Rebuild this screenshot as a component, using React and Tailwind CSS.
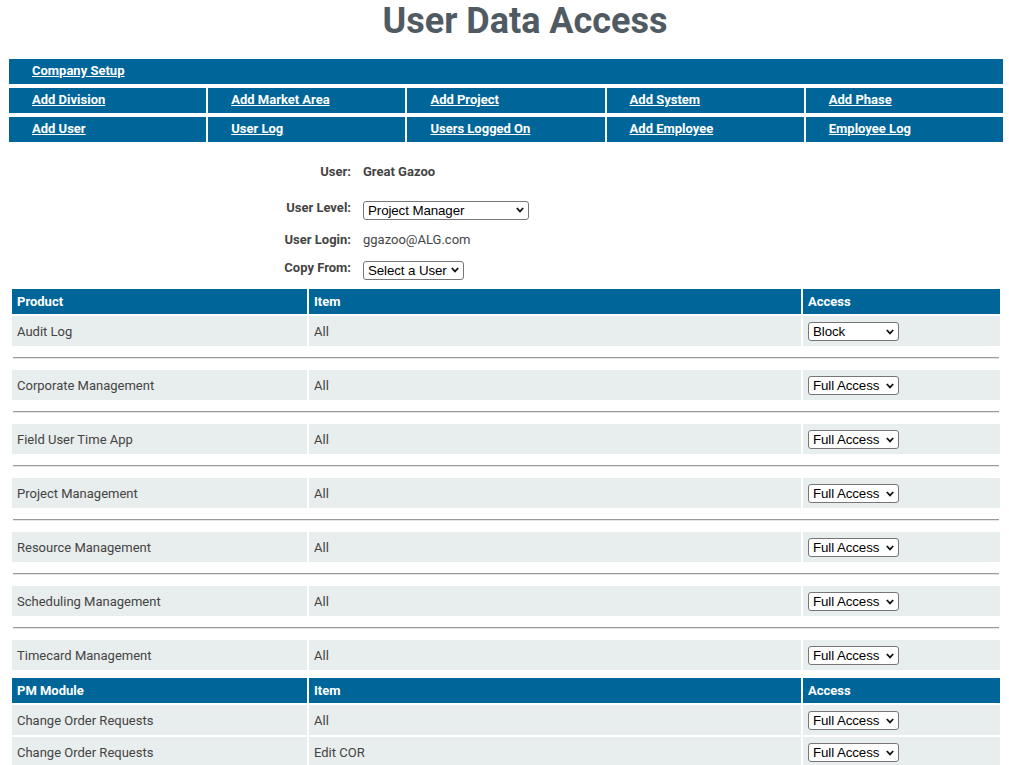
import React from "react";

const navRows = [
  ["Add Division", "Add Market Area", "Add Project", "Add System", "Add Phase"],
  ["Add User", "User Log", "Users Logged On", "Add Employee", "Employee Log"],
];

const products = [
  "Audit Log",
  "Corporate Management",
  "Field User Time App",
  "Project Management",
  "Resource Management",
  "Scheduling Management",
  "Timecard Management",
];

const pmRows = [
  ["Change Order Requests", "All"],
  ["Change Order Requests", "Edit COR"],
];

function Chevron() {
  return (
    <svg
      className="pointer-events-none absolute right-[5px] top-1/2 -translate-y-1/2"
      width="8"
      height="6"
      viewBox="0 0 8 6"
    >
      <polyline points="0.8,1 4,4.4 7.2,1" fill="none" stroke="#111" strokeWidth="1.8" />
    </svg>
  );
}

function Select({ value, options, width }) {
  return (
    <div className="relative inline-block align-middle" style={{ width }}>
      <select
        defaultValue={value}
        className="block w-full h-[19px] appearance-none rounded-[3px] border border-[#767676] bg-white pl-[4px] pr-[8px] text-[13.33px] leading-[17px] tracking-[-0.1px] text-black font-['Liberation_Sans',Arial,sans-serif]"
      >
        {options.map((o) => (
          <option key={o}>{o}</option>
        ))}
      </select>
      <Chevron />
    </div>
  );
}

function Cols() {
  return (
    <colgroup>
      <col className="w-[295px]" />
      <col className="w-[492px]" />
      <col className="w-[197px]" />
    </colgroup>
  );
}

function HeadRow({ first }) {
  return (
    <tr className="h-[25px] bg-[#006699] text-white font-bold">
      <td className="px-[5px]">{first}</td>
      <td className="px-[5px]">Item</td>
      <td className="px-[5px]">Access</td>
    </tr>
  );
}

function DataRow({ name, item, access }) {
  return (
    <tr className="h-[30px] bg-[#e8eded]">
      <td className="px-[5px] pt-[2px]">{name}</td>
      <td className="px-[5px] pt-[2px]">{item}</td>
      <td className="px-[5px]">
        <Select value={access} options={["Block", "Read Only", "Full Access"]} width="91px" />
      </td>
    </tr>
  );
}

export default function App() {
  return (
    <div className="min-h-screen bg-white text-[13px] text-[#444] font-['Roboto',Arial,sans-serif]">
      {/* Title */}
      <div className="h-[59px] pt-[3px] pl-[41px] text-center">
        <h1 className="text-[36px] leading-[36px] font-bold text-[#505a63]">User Data Access</h1>
      </div>

      {/* Nav */}
      <div className="ml-[9px] w-[994px] flex flex-col gap-[4px] text-white font-bold">
        <div className="h-[25px] bg-[#006699] flex items-center pl-[23px] pb-[2px]">
          <a href="#" className="underline">Company Setup</a>
        </div>
        {navRows.map((row, i) => (
          <div key={i} className="grid grid-cols-5 gap-x-[2px]">
            {row.map((label) => (
              <div key={label} className="h-[25px] bg-[#006699] flex items-center pl-[23px] pb-[2px]">
                <a href="#" className="underline">{label}</a>
              </div>
            ))}
          </div>
        ))}
      </div>

      {/* User info */}
      <div className="grid grid-cols-[351px_1fr] gap-x-[12px] text-[13px]">
        <div className="mt-[18px] h-[24px] flex items-center justify-end font-bold">User:</div>
        <div className="mt-[18px] h-[24px] flex items-center font-bold">Great Gazoo</div>

        <div className="mt-[16px] h-[20px] flex items-start justify-end font-bold leading-[16px]">User Level:</div>
        <div className="mt-[16px] h-[20px] flex items-center">
          <Select value="Project Manager" options={["Project Manager", "Administrator", "Field User"]} width="166px" />
        </div>

        <div className="mt-[10px] h-[20px] flex items-center justify-end font-bold">User Login:</div>
        <div className="mt-[10px] h-[20px] flex items-center">ggazoo@ALG.com</div>

        <div className="mt-[10px] h-[20px] flex items-start justify-end font-bold leading-[16px]">Copy From:</div>
        <div className="mt-[10px] h-[20px] flex items-center">
          <Select value="Select a User" options={["Select a User"]} width="101px" />
        </div>
      </div>

      {/* Product access */}
      <table className="mt-[7px] ml-[10px] w-[992px] table-fixed border-separate border-spacing-[2px]">
        <Cols />
        <tbody>
          <HeadRow first="Product" />
          {products.map((p, i) => (
            <React.Fragment key={p}>
              <DataRow name={p} item="All" access={i === 0 ? "Block" : "Full Access"} />
              {i < products.length - 1 && (
                <tr className="h-[20px]">
                  <td colSpan={3} className="p-0 align-top">
                    <div className="mt-[9px] mx-[1px] border-t border-t-[#9a9a9a] border-b border-b-[#e6e6e6]" />
                  </td>
                </tr>
              )}
            </React.Fragment>
          ))}
        </tbody>
      </table>

      {/* PM module */}
      <table className="mt-[4px] ml-[10px] w-[992px] table-fixed border-separate border-spacing-[2px]">
        <Cols />
        <tbody>
          <HeadRow first="PM Module" />
          {pmRows.map(([n, it], i) => (
            <DataRow key={i} name={n} item={it} access="Full Access" />
          ))}
        </tbody>
      </table>
    </div>
  );
}
